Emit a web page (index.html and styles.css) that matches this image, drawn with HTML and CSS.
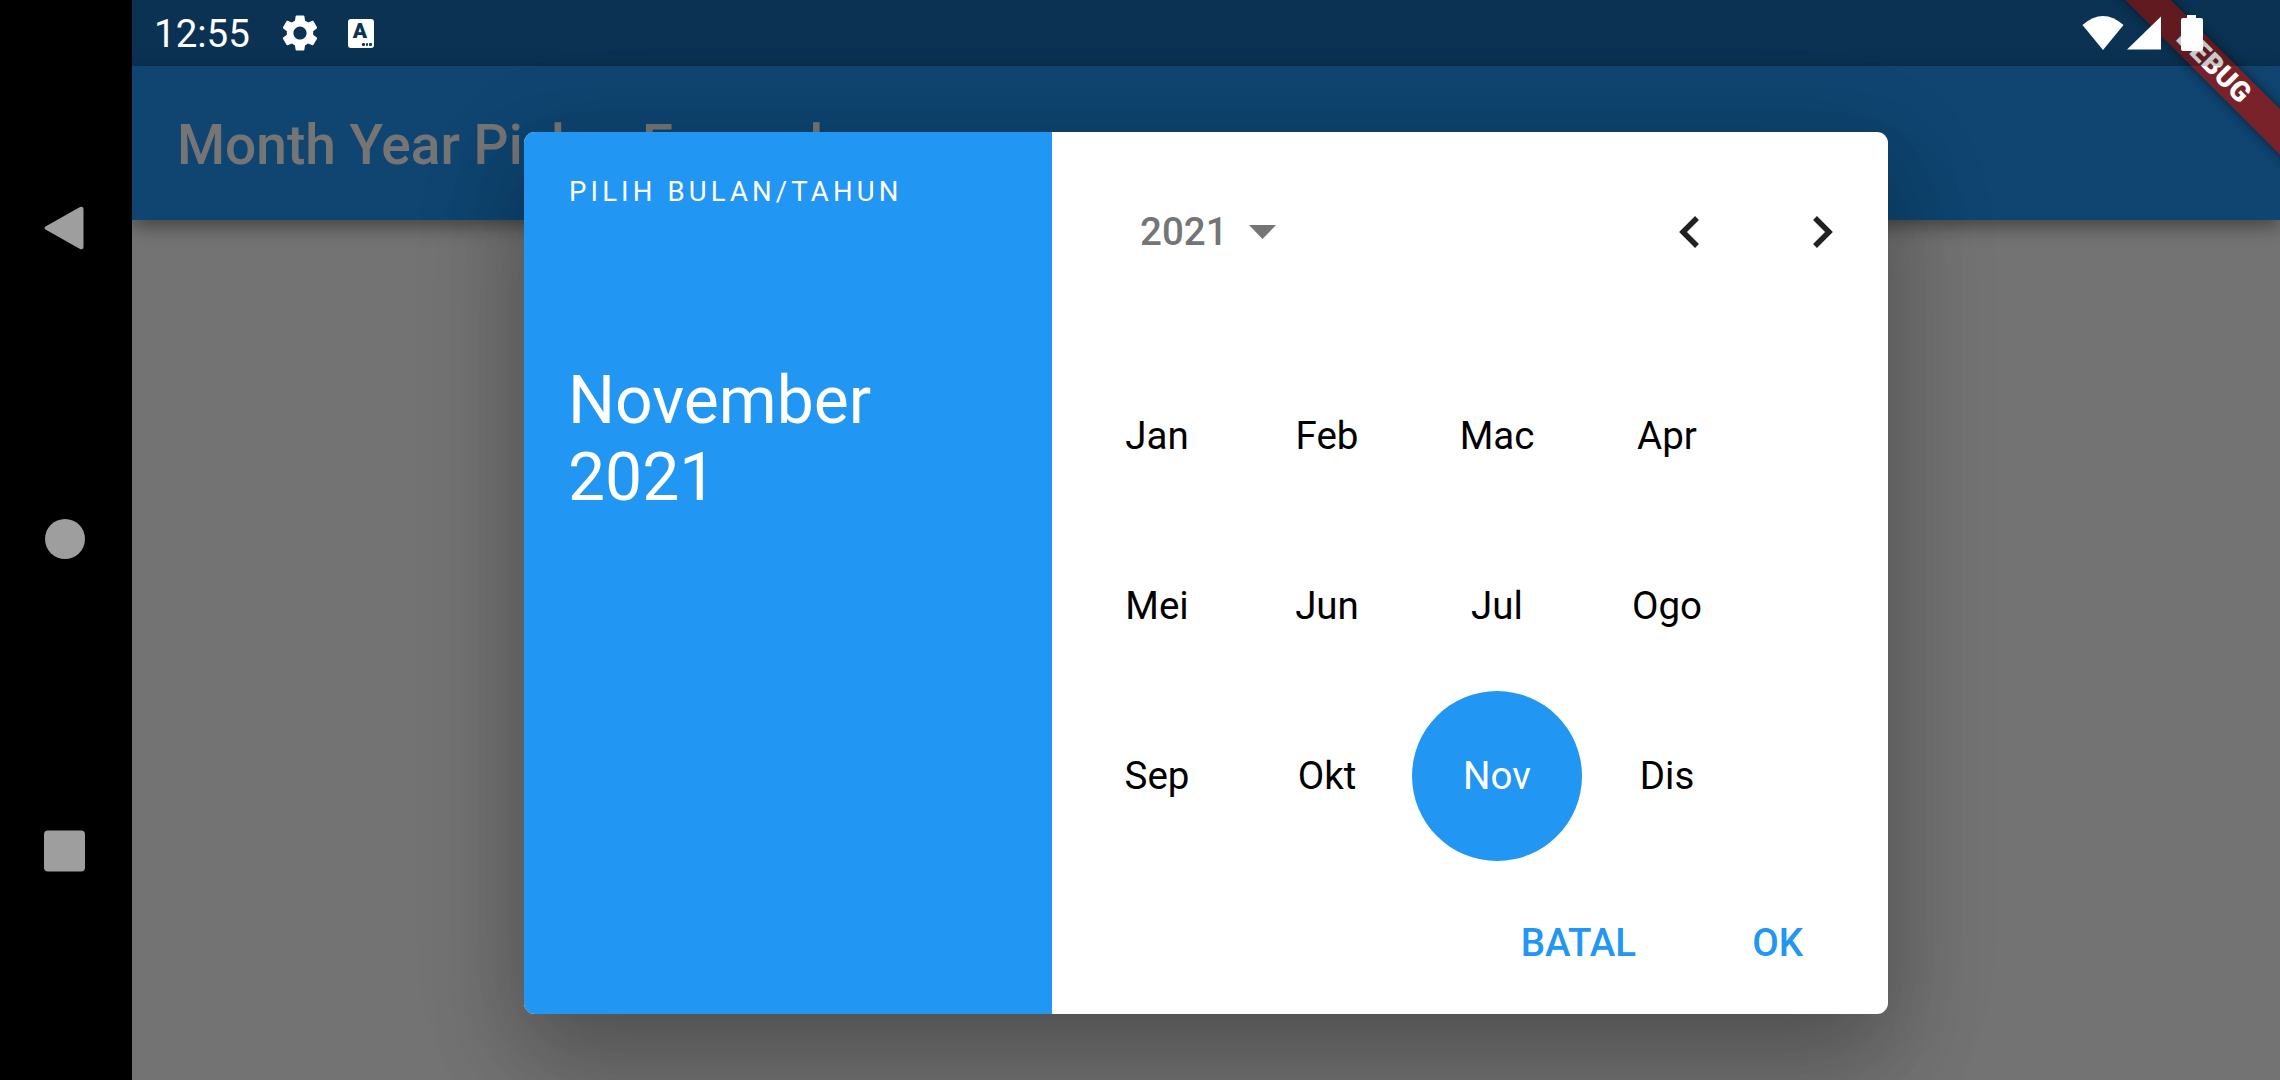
FILE: index.html
```html
<!DOCTYPE html>
<html lang="id">
<head>
<meta charset="utf-8">
<title>Month Year Picker Example</title>
<link rel="stylesheet" href="styles.css">
</head>
<body>
<div class="screen">
  <nav class="navbar">
    <svg class="nav-icon" viewBox="0 0 40 44"><path d="M1.5 20.5 L36 1 Q39.500 0 39.500 3.500 V40.500 Q39.500 44 36 43 L1.500 23.500 Q-0.500 22 1.500 20.500Z"/></svg>
    <svg class="nav-icon" viewBox="0 0 40 44"><circle cx="21" cy="22" r="20"/></svg>
    <svg class="nav-icon" viewBox="0 0 42 44"><rect x="1" y="1.500" width="41" height="41" rx="4"/></svg>
  </nav>
  <div class="device">
    <header class="statusbar">
      <span class="time">12:55</span>
      <svg class="gear" viewBox="0 0 24 24"><path d="M19.140 12.940c.040-.300.060-.610.060-.940 0-.320-.020-.640-.070-.940l2.030-1.580c.180-.140.230-.410.120-.610l-1.920-3.320c-.120-.220-.370-.290-.590-.220l-2.390.960c-.500-.380-1.030-.700-1.620-.940l-.360-2.540c-.040-.240-.240-.410-.480-.410h-3.840c-.240 0-.430.170-.470.410l-.360 2.540c-.590.240-1.130.570-1.620.940l-2.390-.960c-.220-.080-.470 0-.590.220L2.740 8.870c-.120.210-.080.470.120.610l2.030 1.580c-.050.300-.090.630-.090.940s.020.640.070.940l-2.030 1.580c-.180.140-.230.410-.120.610l1.920 3.320c.120.220.370.290.590.220l2.390-.960c.500.380 1.030.700 1.620.940l.360 2.540c.050.240.240.410.480.410h3.840c.240 0 .440-.170.470-.410l.360-2.540c.590-.240 1.130-.560 1.620-.940l2.390.960c.220.080.470 0 .590-.220l1.920-3.320c.120-.220.070-.470-.120-.610l-2.010-1.580zM12 15.600c-1.980 0-3.600-1.620-3.600-3.600s1.620-3.600 3.600-3.600 3.600 1.620 3.600 3.600-1.620 3.600-3.600 3.600z"/></svg>
      <span class="keyboard">
        <span class="keyboard-letter">A</span>
        <span class="keyboard-dots"><i></i><i></i><i></i></span>
      </span>
      <span class="status-right">
        <svg class="wifi" viewBox="0 0 42 34"><path d="M21 34 L0.500 9 Q21 -9 41.500 9 Z"/></svg>
        <svg class="signal" viewBox="0 0 34 34"><path d="M0 33.500 L34 0.500 V33.500 Z"/></svg>
        <svg class="battery" viewBox="0 0 22 36"><path d="M6 0 H15 V3 H20 Q22 3 22 5 V34 Q22 36 20 36 H2 Q0 36 0 34 V5 Q0 3 2 3 H6 Z"/></svg>
      </span>
    </header>
    <div class="appbar"><h1 class="appbar-title">Month Year Picker Example</h1></div>
    <div class="page"></div>
    <div class="scrim"></div>
  </div>

  <section class="dialog">
    <aside class="dialog-header">
      <p class="dialog-label">PILIH BULAN/TAHUN</p>
      <p class="dialog-date">November<br>2021</p>
    </aside>
    <div class="picker">
      <div class="picker-nav">
        <span class="picker-year">2021</span>
        <svg class="caret" viewBox="0 0 27 14"><path d="M0 0 H27 L13.500 14 Z"/></svg>
        <svg class="chevron chevron-prev" viewBox="0 0 21 32"><path d="M18 2 L4 16 L18 30"/></svg>
        <svg class="chevron chevron-next" viewBox="0 0 21 32"><path d="M3 2 L17 16 L3 30"/></svg>
      </div>
      <div class="months">
        <span class="month">Jan</span>
        <span class="month">Feb</span>
        <span class="month">Mac</span>
        <span class="month">Apr</span>
        <span class="month">Mei</span>
        <span class="month">Jun</span>
        <span class="month">Jul</span>
        <span class="month">Ogo</span>
        <span class="month">Sep</span>
        <span class="month">Okt</span>
        <span class="month month-selected">Nov</span>
        <span class="month">Dis</span>
      </div>
      <div class="actions">
        <span class="action">BATAL</span>
        <span class="action">OK</span>
      </div>
    </div>
  </section>

  <div class="debug-banner">DEBUG</div>
</div>
</body>
</html>
```
FILE: styles.css
```css
* { box-sizing: border-box; }
html, body { margin: 0; padding: 0; background: #000; }
body { font-family: Roboto, "Liberation Sans", sans-serif; }

.screen {
  position: relative;
  display: flex;
  width: 2280px;
  height: 1080px;
  overflow: hidden;
  background: #000;
}

/* Android nav bar */
.navbar {
  flex: 0 0 132px;
  display: grid;
  grid-template-rows: repeat(3, 311.5px);
  align-items: center;
  padding: 72px 0 0 43px;
}
.nav-icon { width: 42px; height: 44px; fill: #9e9e9e; }

.device {
  position: relative;
  flex: 1;
  display: flex;
  flex-direction: column;
  background: #0e406a;
}

.statusbar {
  position: relative;
  z-index: 6;
  flex: 0 0 66px;
  display: flex;
  align-items: center;
  padding-left: 22px;
  background: rgba(0, 0, 0, .21);
  color: #fff;
}
.time { font-size: 38.500px; line-height: 1; margin-top: 3px; }
.gear { width: 44px; height: 44px; margin-left: 28px; fill: #fff; }
.keyboard {
  position: relative;
  width: 26px;
  height: 29px;
  margin-left: 26px;
  border-radius: 3px;
  background: #fff;
  display: flex;
  justify-content: center;
}
.keyboard-letter {
  font-size: 21px;
  font-weight: 900;
  line-height: 24px;
  color: #0b3253;
  margin-left: -2px;
}
.keyboard-dots {
  position: absolute;
  right: 2px;
  bottom: 2px;
  display: flex;
  gap: 1px;
}
.keyboard-dots i { width: 2.500px; height: 2.500px; border-radius: 50%; background: #0b3253; }

.status-right {
  margin-left: auto;
  display: flex;
  align-items: center;
  padding-right: 77px;
}
.wifi { width: 42px; height: 34px; fill: #fff; }
.signal { width: 34px; height: 34px; margin-left: 3px; fill: #fff; }
.battery { width: 22px; height: 36px; margin-left: 20px; fill: #fff; }

.appbar {
  position: relative;
  flex: 0 0 154px;
  display: flex;
  align-items: center;
  padding: 4px 0 0 45px;
  background: #2196f3;
  box-shadow: 0 6px 18px rgba(0, 0, 0, .42);
  z-index: 1;
}
.appbar-title {
  margin: 0;
  font-size: 55px;
  font-weight: 500;
  line-height: 1;
  color: #fff;
}
.page { flex: 1; background: #fafafa; }
.scrim {
  position: absolute;
  inset: 66px 0 0 0;
  z-index: 2;
  background: rgba(0, 0, 0, .54);
}

/* Dialog */
.dialog {
  position: absolute;
  left: 524px;
  top: 132px;
  z-index: 4;
  display: flex;
  width: 1364px;
  height: 882px;
  border-radius: 11px;
  overflow: hidden;
  background: #fff;
  box-shadow: 0 66px 105px rgba(0, 0, 0, .1),
              0 25px 127px rgba(0, 0, 0, .1),
              0 30px 80px rgba(0, 0, 0, .16);
}
.dialog-header {
  flex: 0 0 528px;
  padding: 44px 0 0 44px;
  background: #2196f3;
  color: #fff;
}
.dialog-label {
  margin: 0 0 0 1px;
  font-size: 27.500px;
  line-height: 32px;
  letter-spacing: 4.150px;
  white-space: nowrap;
}
.dialog-date {
  margin: 154px 0 0;
  font-size: 66px;
  line-height: 77px;
}

.picker {
  flex: 1;
  display: flex;
  flex-direction: column;
}
.picker-nav {
  flex: 0 0 198px;
  display: flex;
  align-items: center;
  padding: 2px 55px 0 88px;
  margin-bottom: 21px;
}
.picker-year { font-size: 38.500px; font-weight: 500; line-height: 1; color: #757575; }
.caret { width: 27px; height: 14px; margin: 0 0 0 21px; fill: #757575; }
.chevron {
  width: 21px;
  height: 32px;
  fill: none;
  stroke: #212121;
  stroke-width: 5.500px;
}
.chevron-prev { margin-left: auto; }
.chevron-next { margin-left: 112px; }

.months {
  flex: 0 0 510px;
  display: grid;
  grid-template-columns: repeat(4, 170px);
  grid-template-rows: repeat(3, 170px);
  padding-left: 20px;
}
.month {
  display: flex;
  align-items: center;
  justify-content: center;
  border-radius: 50%;
  font-size: 38.500px;
  line-height: 1;
  color: #000;
}
.month-selected { background: #2196f3; color: #fff; }

.actions {
  flex: 1;
  display: flex;
  justify-content: flex-end;
  align-items: center;
  gap: 116px;
  padding: 11px 85px 0 0;
}
.action {
  font-size: 38.500px;
  font-weight: 500;
  line-height: 1;
  color: #2196f3;
}

.debug-banner {
  position: absolute;
  left: 2014px;
  top: 50px;
  z-index: 5;
  width: 400px;
  height: 32px;
  display: flex;
  align-items: center;
  justify-content: center;
  transform: rotate(45deg);
  background: #7a2229;
  box-shadow: 0 0 12px rgba(0, 0, 0, .5);
  color: #fff;
  font-size: 28px;
  font-weight: 900;
  line-height: 1;
  letter-spacing: .5px;
}
```
